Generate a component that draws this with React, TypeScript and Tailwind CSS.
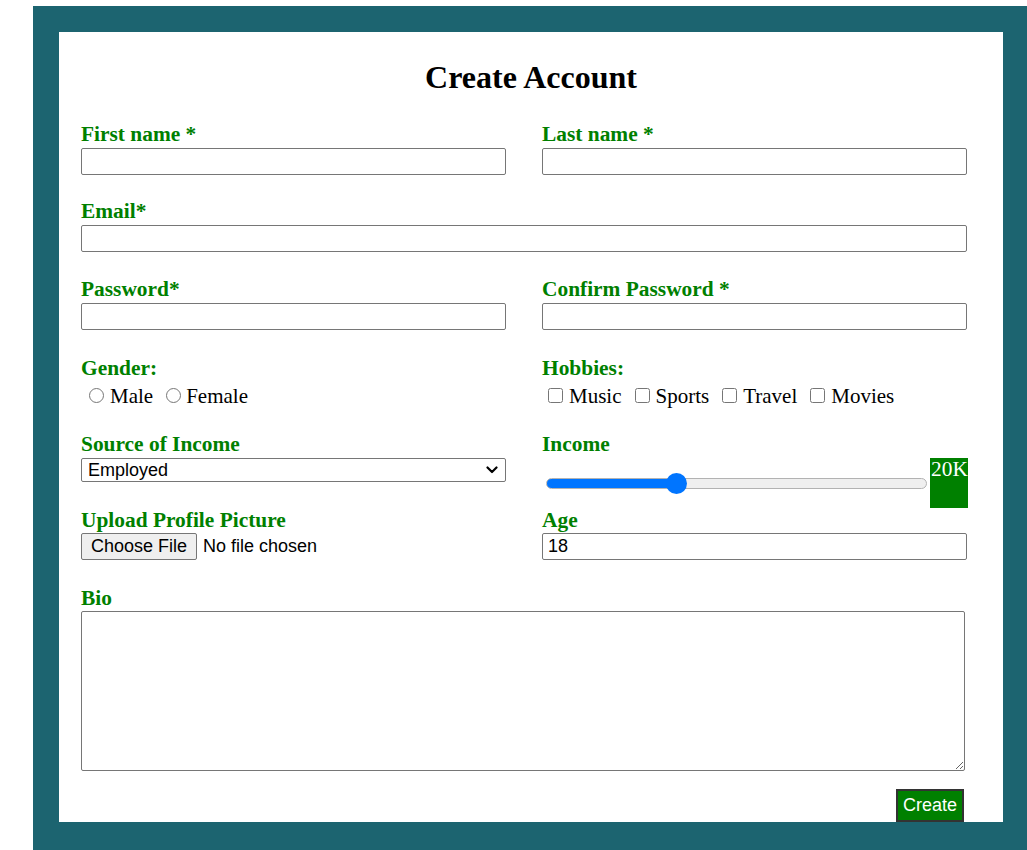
import { useState } from 'react'

const labelCls = "block text-[21.4px] leading-[23px] font-bold text-[#008000]"
const inputCls =
  "block h-[27px] w-full border border-[#767676] rounded-[2px] bg-white px-[5px] text-[18px] font-['Liberation_Sans',Arial,sans-serif] text-black outline-none"

function Field({ label, type = 'text' }: { label: string; type?: string }) {
  return (
    <div>
      <label className={labelCls}>{label}</label>
      <input type={type} className={'mt-[2px] ' + inputCls} />
    </div>
  )
}

export default function App() {
  const [income, setIncome] = useState(20)
  const pct = (income / 60) * 100
  const stop = `calc(${pct}% + ${((0.5 - pct / 100) * 21).toFixed(2)}px)`

  return (
    <div className="h-screen w-full overflow-hidden bg-white font-['Liberation_Serif','Times_New_Roman',serif]">
      <div className="ml-[33px] mt-[6px] w-[996px] bg-[#1c6470] px-[26px] pt-[26px] pb-[30px]">
        <form
          className="h-[790px] bg-white pl-[22px] pr-[36px] pt-[27px]"
          onSubmit={(e) => e.preventDefault()}
        >
          <h1 className="-ml-[22px] -mr-[36px] h-[37px] text-center text-[32px] leading-[37px] font-bold text-black">
            Create Account
          </h1>

          <div className="mt-[27px] grid grid-cols-2 gap-x-[36px]">
            <Field label="First name *" />
            <Field label="Last name *" />
          </div>

          <div className="mt-[25px]">
            <Field label="Email*" type="email" />
          </div>

          <div className="mt-[26px] grid grid-cols-2 gap-x-[36px]">
            <Field label="Password*" type="password" />
            <Field label="Confirm Password *" type="password" />
          </div>

          <div className="mt-[27px] grid grid-cols-2 gap-x-[36px] text-[21px] text-black">
            <div>
              <span className={labelCls}>Gender:</span>
              <div className="mt-[5px] flex h-[23px] items-center leading-[23px]">
                <input type="radio" name="gender" className="mb-[3px] ml-[8px] h-[15px] w-[15px]" />
                <span className="ml-[6px]">Male</span>
                <input type="radio" name="gender" className="mb-[3px] ml-[13px] h-[15px] w-[15px]" />
                <span className="ml-[5px]">Female</span>
              </div>
            </div>
            <div>
              <span className={labelCls}>Hobbies:</span>
              <div className="mt-[5px] flex h-[23px] items-center leading-[23px]">
                {['Music', 'Sports', 'Travel', 'Movies'].map((h, i) => (
                  <span key={h} className="flex items-center">
                    <input
                      type="checkbox"
                      className={i === 0 ? 'mb-[3px] ml-[6px] h-[15px] w-[15px]' : 'mb-[3px] ml-[13px] h-[15px] w-[15px]'}
                    />
                    <span className="ml-[6px]">{h}</span>
                  </span>
                ))}
              </div>
            </div>
          </div>

          <div className="mt-[25px] grid grid-cols-2 gap-x-[36px]">
            <div>
              <label className={labelCls}>Source of Income</label>
              <div className="relative mt-[2px]">
                <select className="block h-[24px] w-full appearance-none border border-[#767676] rounded-[2px] bg-white pl-[6px] text-[18px] leading-[20px] font-['Liberation_Sans',Arial,sans-serif] text-black outline-none">
                  <option>Employed</option>
                  <option>Self-employed</option>
                  <option>Unemployed</option>
                </select>
                <svg
                  className="pointer-events-none absolute right-[8px] top-[8px]"
                  width="12"
                  height="8"
                  viewBox="0 0 12 8"
                  fill="none"
                  stroke="#000"
                  strokeWidth="2.2"
                  strokeLinecap="round"
                  strokeLinejoin="round"
                >
                  <path d="M1.5 1.5 L6 6 L10.5 1.5" />
                </svg>
              </div>
            </div>
            <div>
              <label className={labelCls}>Income</label>
              <div className="mt-[2px] flex h-[50px] items-center">
                <input
                  type="range"
                  min={0}
                  max={60}
                  value={income}
                  onChange={(e) => setIncome(Number(e.target.value))}
                  className="ml-[4px] mr-[3px] h-[11px] flex-1 appearance-none rounded-full border border-[#b2b2b2] outline-none [&::-webkit-slider-thumb]:h-[21px] [&::-webkit-slider-thumb]:w-[21px] [&::-webkit-slider-thumb]:appearance-none [&::-webkit-slider-thumb]:rounded-full [&::-webkit-slider-thumb]:bg-[#0075ff]"
                  style={{ background: `linear-gradient(to right, #0075ff ${stop}, #efefef ${stop})` }}
                />
                <div className="-mr-[1px] h-[50px] w-[38px] self-start bg-[#008000] pl-[1px] text-[21.4px] leading-[23px] text-white">
                  {income}K
                </div>
              </div>
            </div>
          </div>

          <div className="mt-[1px] grid grid-cols-2 gap-x-[36px]">
            <div>
              <label className={labelCls}>Upload Profile Picture</label>
              <input
                type="file"
                className="mt-[1px] block h-[27px] text-[18px] leading-[21px] font-['Liberation_Sans',Arial,sans-serif] text-black file:mr-[6px] file:h-[27px] file:rounded-[2px] file:border file:border-[#767676] file:bg-[#efefef] file:px-[9px] file:text-[18px] file:text-black"
              />
            </div>
            <div>
              <label className={labelCls}>Age</label>
              <input type="number" defaultValue={18} className={'mt-[1px] ' + inputCls} />
            </div>
          </div>

          <div className="mt-[27px]">
            <label className={labelCls}>Bio</label>
            <textarea className="mt-[1px] block h-[160px] w-[884px] resize border border-[#767676] rounded-[2px] bg-white p-[2px] text-[18px] font-['Liberation_Sans',Arial,sans-serif] outline-none" />
          </div>

          <div className="mt-[18px] flex justify-end">
            <button
              type="submit"
              className="mr-[3px] h-[33px] border-2 border-[#333333] bg-[#008000] px-[5px] text-[18px] leading-[21px] font-['Liberation_Sans',Arial,sans-serif] text-white"
            >
              Create
            </button>
          </div>
        </form>
      </div>
    </div>
  )
}
